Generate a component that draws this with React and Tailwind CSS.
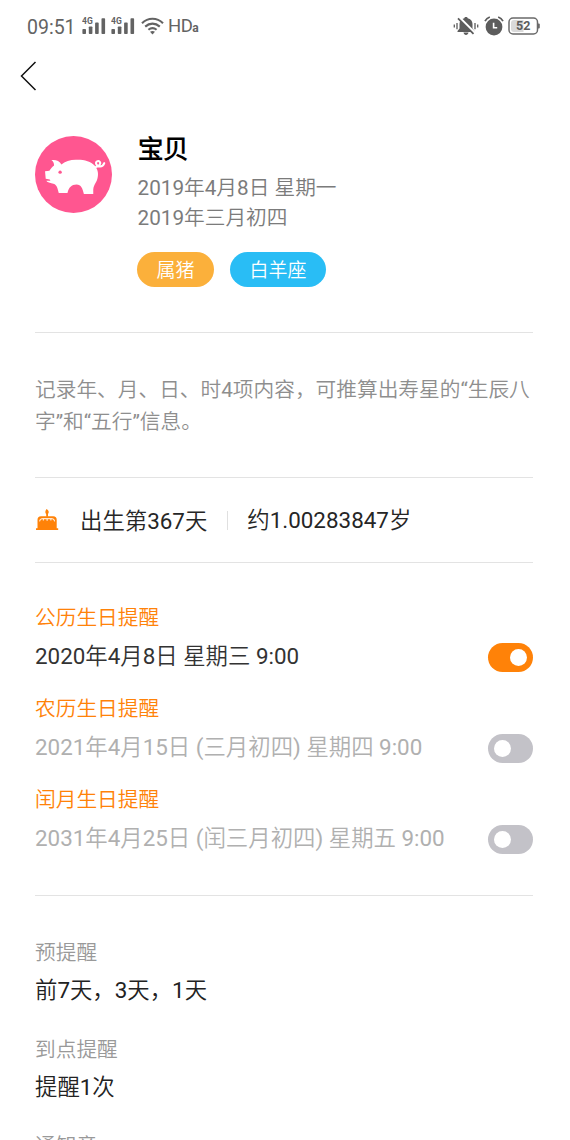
import React, { useState } from "react";

const TEXT_FONT =
  "font-['Roboto','Noto_Sans_CJK_SC_DemiLight','Noto_Sans_CJK_SC_Light','Noto_Sans_CJK_SC',sans-serif]";

const birthdayReminders = [
  { id: "solar", title: "公历生日提醒", value: "2020年4月8日 星期三 9:00", on: true },
  { id: "lunar", title: "农历生日提醒", value: "2021年4月15日 (三月初四) 星期四 9:00", on: false },
  { id: "leap", title: "闰月生日提醒", value: "2031年4月25日 (闰三月初四) 星期五 9:00", on: false },
];

const settings = [
  { title: "预提醒", value: "前7天，3天，1天" },
  { title: "到点提醒", value: "提醒1次" },
  { title: "通知音", value: "" },
];

const SignalIcon = () => (
  <svg width="24" height="18" viewBox="0 0 24 18" fill="#636363">
    <text x="0" y="7.4" fontSize="8.5" fontWeight="700" fontFamily="Roboto, sans-serif">
      4G
    </text>
    <rect x="0.4" y="12" width="3.6" height="5" rx="0.8" />
    <rect x="6.8" y="9.4" width="3.6" height="7.6" rx="0.8" />
    <rect x="13.1" y="5.6" width="3.6" height="11.4" rx="0.8" />
    <rect x="19.5" y="1.2" width="3.6" height="15.8" rx="0.8" />
  </svg>
);

const WifiIcon = () => (
  <svg width="23" height="18" viewBox="0 0 23 18" fill="none" stroke="#636363" strokeWidth="2.1">
    <path d="M1 6.2C7 .2 16 .2 22 6.2" />
    <path d="M4.2 9.6c4.4-4 10.2-4 14.6 0" />
    <path d="M7.4 12.8c2.5-2.1 5.7-2.1 8.2 0" />
    <path d="M9 14.8q2.5-1.7 5 0l-2.5 2.8z" fill="#636363" stroke="none" />
  </svg>
);

const MutedBellIcon = () => (
  <svg width="26" height="20" viewBox="0 0 26 20">
    <path
      d="M13 1c1 0 1.6.5 1.7 1.200 3 .7 4.800 2.900 4.800 5.800v4.500l2 2.500v1H4.500v-1l2-2.500V8c0-2.900 1.800-5.100 4.800-5.800.1-.7.7-1.200 1.700-1.200zM10.500 16.600h5c-.3 1.500-1.200 2.300-2.500 2.300s-2.200-.8-2.500-2.300z"
      fill="#5c5c5c"
    />
    <path d="M6.500 1.500 21.500 16.500" stroke="#fff" strokeWidth="2.4" />
    <path d="M5 2.300 20.500 17.800" stroke="#5c5c5c" strokeWidth="1.8" />
    <path d="M1.300 8.600v3M4 7v6.200M22 7v6.200M24.700 8.600v3" stroke="#5c5c5c" strokeWidth="1.3" />
  </svg>
);

const AlarmIcon = () => (
  <svg width="20" height="20" viewBox="0 0 20 20" fill="none">
    <circle cx="10" cy="11" r="8.4" fill="#5c5c5c" />
    <path d="M1 5.200Q2.600 2.200 5.800 1M19 5.200Q17.400 2.200 14.200 1" stroke="#5c5c5c" strokeWidth="1.7" />
    <path d="M9.600 6.800v5h3.600" stroke="#fff" strokeWidth="1.6" />
  </svg>
);

const Battery = ({ level }) => (
  <svg width="33" height="18" viewBox="0 0 33 18">
    <rect x="1" y="1" width="28.5" height="16" rx="4" fill="#fff" stroke="#6a6a6a" strokeWidth="1.5" />
    <path d="M6 3h9.500v12H6a3 3 0 0 1-3-3V6a3 3 0 0 1 3-3z" fill="#dadada" />
    <path d="M30 6.500h.8q1 0 1 1v3q0 1-1 1H30z" fill="#6a6a6a" />
    <text
      x="15.2"
      y="13.4"
      textAnchor="middle"
      fontSize="12.5"
      fontWeight="700"
      fontFamily="Roboto, sans-serif"
      fill="#5c5c5c"
    >
      {level}
    </text>
  </svg>
);

const PigAvatar = () => (
  <svg width="77" height="77" viewBox="46 46 230 230" className="mt-[0.5px] shrink-0">
    <circle cx="161" cy="161" r="115" fill="#ff5690" />
    <path
      d="M95 118C107 116 119 120 125 131C135 122 151 117 168 117C192 116 213 122 224 134
        C234 145 236 158 233 171C231 184 222 190 220 206V219H192
        C188 203 184 191 170 191C155 191 147 200 143 216H117L113 202C110 191 103 188 95 187
        C88 186 82 184 80 180L92 180L90 176L78 174L76 151L89 150C93 143 98 137 103 134
        C103 127 100 122 95 118Z"
      fill="#fff"
    />
    <circle cx="121" cy="154" r="5" fill="#ff5690" />
    <path
      d="M221 140C234 138 244 131 240 124C235 118 226 122 229 130C232 139 248 141 253 127"
      fill="none"
      stroke="#fff"
      strokeWidth="6"
      strokeLinecap="round"
    />
  </svg>
);

const CakeIcon = () => (
  <svg width="24" height="22" viewBox="0 0 24 22" fill="#ff8208">
    <path d="M11.6 0c2.800 1.900 2.700 4.600.4 5.400-2.300-.9-2-3.600-.4-5.400z" />
    <path d="M11.200 4.800h1.800v3h-1.800z" />
    <path d="M6 7.200h12.200q3.500 0 3.500 3.500v8.500h1.500V21H1v-1.800h1.500v-8.500q0-3.500 3.500-3.500z" />
    <path
      d="M4.700 12.400q-.2-2.600 2.400-2.700h10q2.600.1 2.400 2.700M8.300 10v1.500M12.100 10v1.800M15.900 10v1.500"
      fill="none"
      stroke="#fff"
      strokeWidth="1"
    />
  </svg>
);

const Toggle = ({ checked, onChange }) => (
  <button
    type="button"
    role="switch"
    aria-checked={checked}
    onClick={onChange}
    className={`flex h-[29px] w-[45px] shrink-0 items-center rounded-full ${
      checked ? "justify-end bg-[#ff8208] pr-[6px]" : "justify-start bg-[#c3c2c8] pl-[6px]"
    }`}
  >
    <span className="size-[17px] rounded-full bg-white" />
  </button>
);

const StatusBar = () => (
  <div className="flex h-[52px] items-center pl-[27px] pr-[29px] text-[#636363]">
    <span className="w-[55px] pt-[3px] text-[19.5px] leading-none">09:51</span>
    <div className="flex items-center gap-[5px]">
      <SignalIcon />
      <SignalIcon />
    </div>
    <div className="ml-[6px]">
      <WifiIcon />
    </div>
    <div className="ml-[4px] flex items-baseline pt-px leading-none">
      <span className="text-[18.5px] tracking-[-0.5px]">HD</span>
      <span className="text-[12px] font-bold">a</span>
    </div>
    <div className="ml-auto flex items-center">
      <MutedBellIcon />
      <div className="ml-[5px] mr-[4px]">
        <AlarmIcon />
      </div>
      <Battery level={52} />
    </div>
  </div>
);

const App = () => {
  const [reminders, setReminders] = useState(birthdayReminders);

  const handleToggle = (id) => {
    setReminders((prev) => prev.map((r) => (r.id === id ? { ...r, on: !r.on } : r)));
  };

  return (
    <div className={`h-[1140px] w-[570px] overflow-hidden bg-white ${TEXT_FONT}`}>
      <StatusBar />
      <div className="flex h-[48px] items-center pl-[20px]">
        <button type="button" aria-label="返回">
          <svg width="17" height="30" viewBox="0 0 17 30" fill="none" stroke="#111" strokeWidth="1.5">
            <path d="M15.500 1 1.500 15l14 14" />
          </svg>
        </button>
      </div>

      <div className="ml-[35px] mr-[37px]">
        {/* 头像与生日信息 */}
        <div className="flex h-[232px] pt-[35px]">
          <PigAvatar />
          <div className="ml-[25px] text-[20.7px] leading-[30px] text-[#7b7b7b]">
            <h1 className="mb-[8px] pl-px text-[25.3px] font-bold text-black">宝贝</h1>
            <p className="pl-[0.5px]">2019年4月8日 星期一</p>
            <p className="pl-[0.5px]">2019年三月初四</p>
            <div className="mt-[19px] flex gap-4 text-[19px] leading-[35px] text-white">
              <span className="h-[35px] w-[77px] rounded-full bg-[#fbb03b] pt-px text-center">属猪</span>
              <span className="h-[35px] w-[96px] rounded-full bg-[#29bdf5] pt-px text-center">白羊座</span>
            </div>
          </div>
        </div>

        <div className="h-[145px] border-t border-[#e3e3e3] pt-[41px]">
          <p className="-mr-1 text-[20.7px] leading-[32px] text-[#8e8e8e]">
            记录年、月、日、时4项内容，可推算出寿星的“生辰八字”和“五行”信息。
          </p>
        </div>

        {/* 出生天数 */}
        <div className="flex h-[85px] items-center border-t border-[#e3e3e3] text-[22.4px] text-[#262626]">
          <CakeIcon />
          <span className="ml-[21px] pt-[3px]">出生第367天</span>
          <span className="ml-[20px] mr-[19px] h-[19px] w-px bg-[#e0e0e0]" />
          <span className="pt-[2px]">约1.00283847岁</span>
        </div>

        <div className="flex h-[333px] flex-col gap-[13px] border-t border-[#e3e3e3] pt-[40px]">
          {reminders.map((item) => (
            <div key={item.id}>
              <div className="text-[20.7px] leading-[30px] text-[#ff8208]">{item.title}</div>
              <div className="flex h-[48px] items-center justify-between">
                <span className={`text-[22.4px] ${item.on ? "text-[#333]" : "text-[#b0b0b0]"}`}>
                  {item.value}
                </span>
                <Toggle checked={item.on} onChange={() => handleToggle(item.id)} />
              </div>
            </div>
          ))}
        </div>

        <div className="flex flex-col gap-[22.5px] border-t border-[#e3e3e3] pt-[42px]">
          {settings.map((item) => (
            <div key={item.title}>
              <div className="text-[20.7px] leading-[30px] text-[#999]">{item.title}</div>
              <div className="text-[22.4px] leading-[44px] text-[#222]">{item.value}</div>
            </div>
          ))}
        </div>
      </div>
    </div>
  );
};

export default App;
